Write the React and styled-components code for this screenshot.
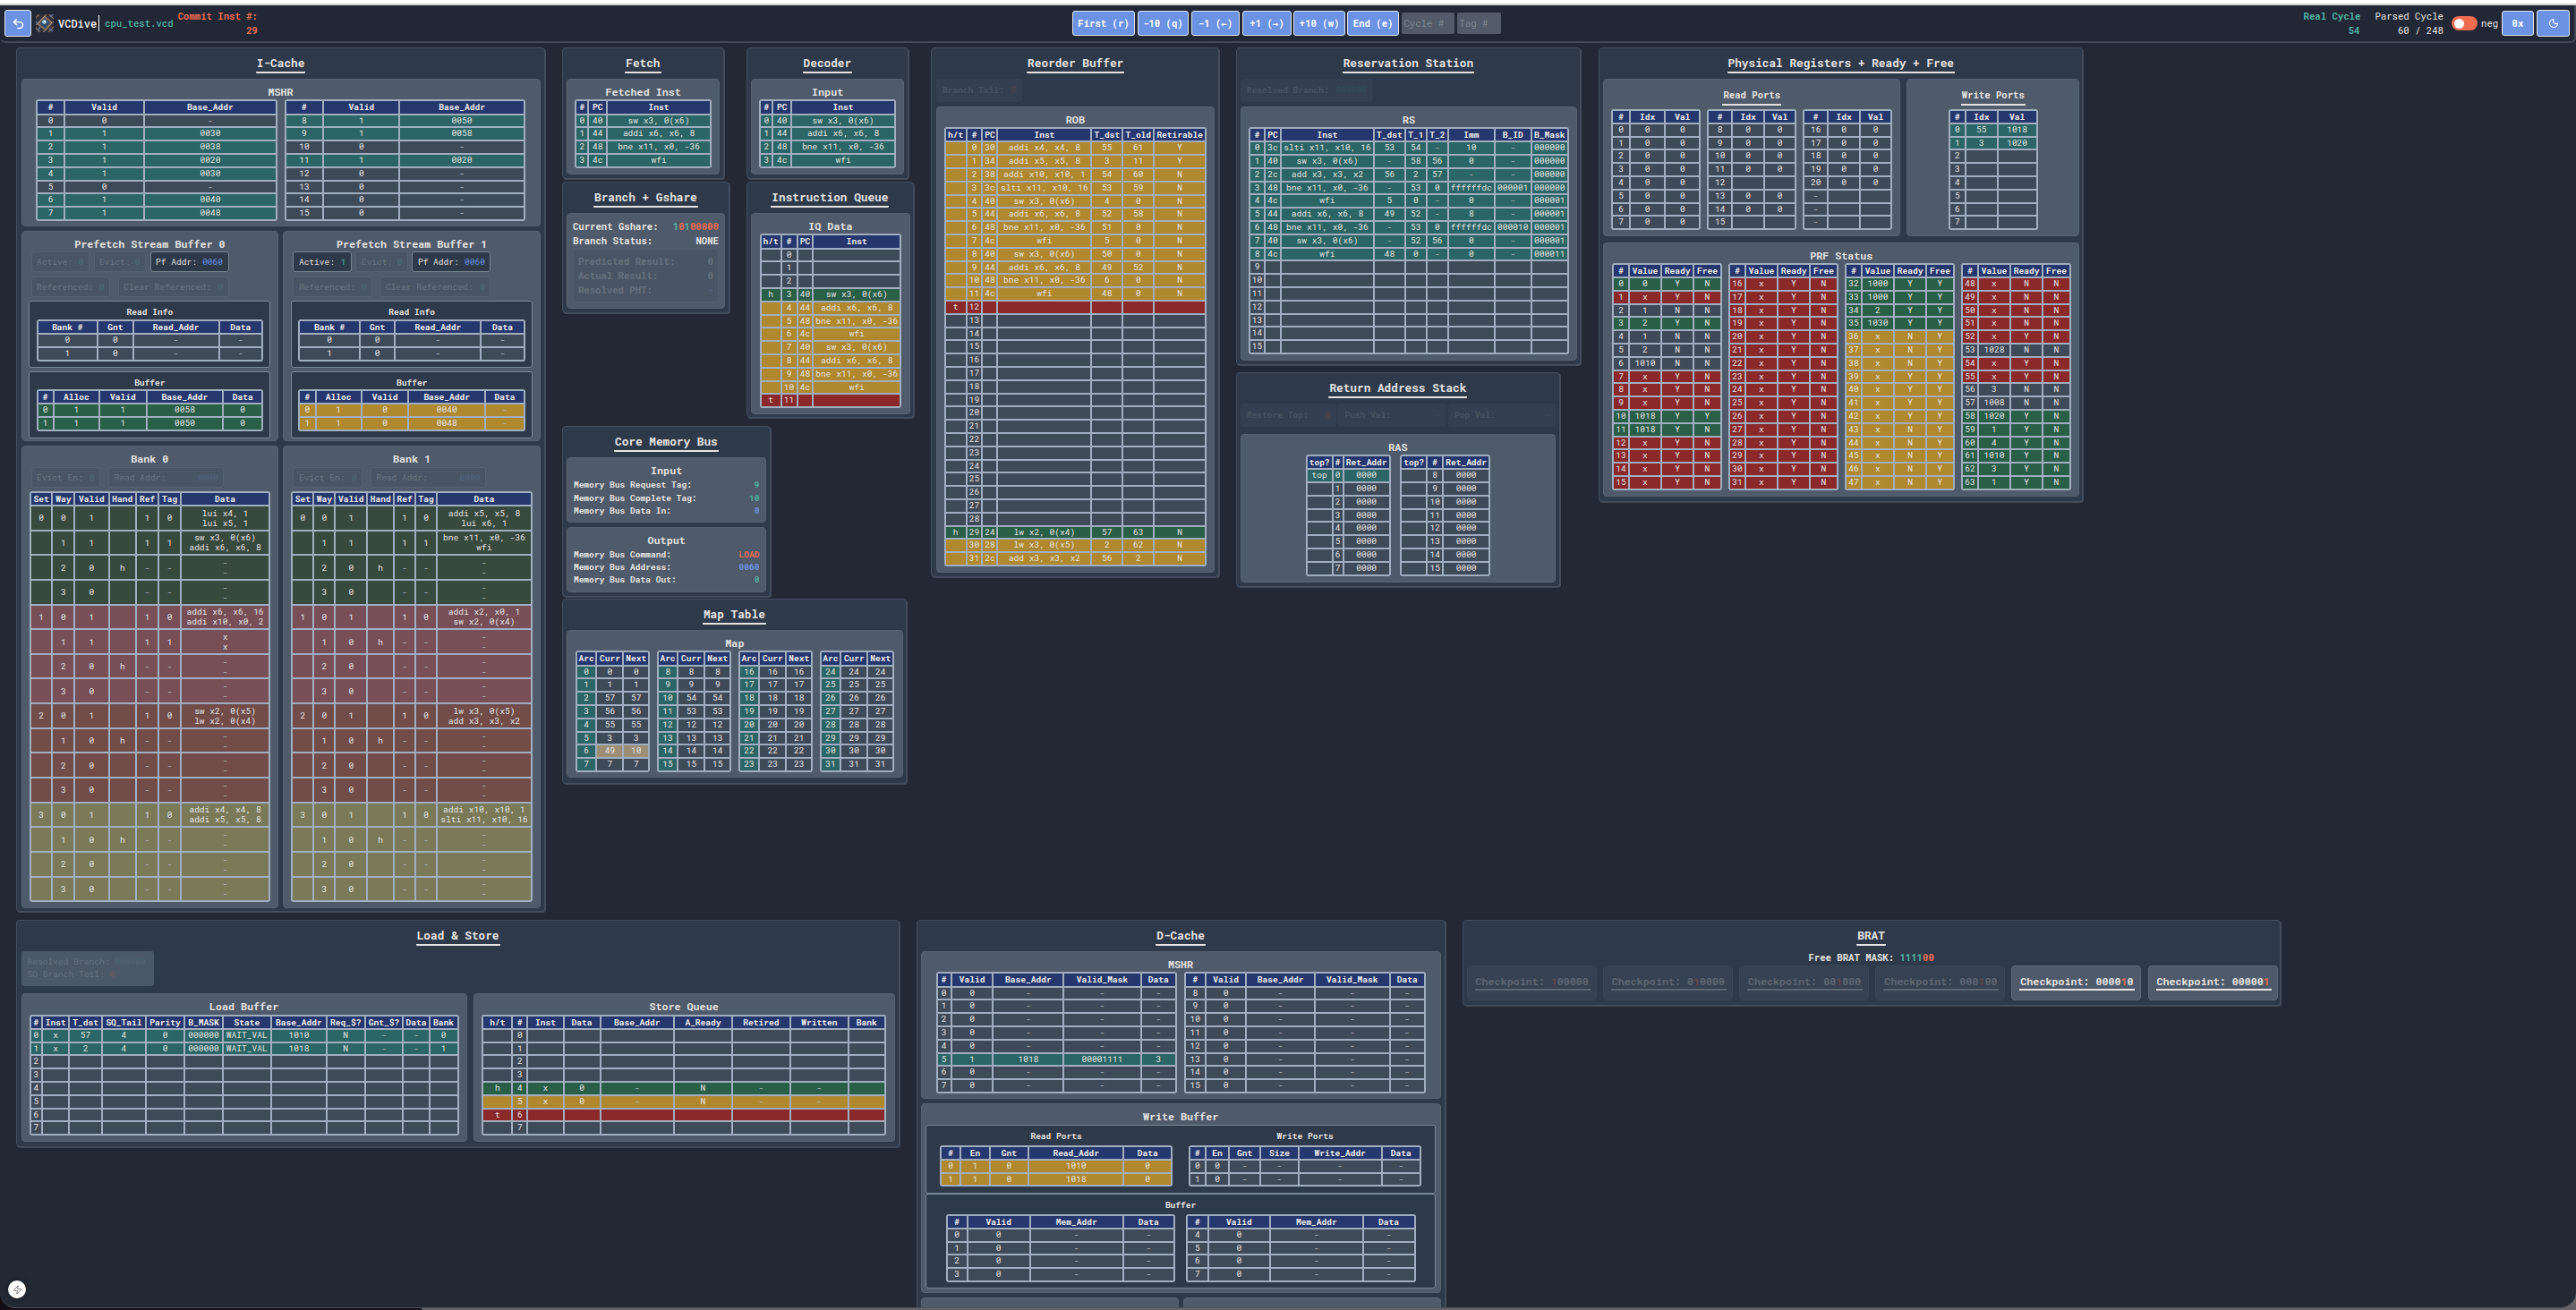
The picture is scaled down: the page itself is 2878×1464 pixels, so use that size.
import React from "react";
import styled, { createGlobalStyle, css } from "styled-components";
import { Undo2, Moon, Zap } from "lucide-react";

const c = {
  bg: "#222834",
  panel: "#2e3a4a",
  section: "#4f5b6a",
  line: "#a0aec0",
  text: "#e4e4e4",
  teal: "#4fb3a3",
  orange: "#ef6c51",
  blue: "#6c92e4",
};

const tones = {
  n: "#3f4a59",
  t: "#2b6565",
  g: "#295e47",
  y: "#b0882e",
  r: "#8b2829",
  k: "#9c8d75",
  s0: "#38493d",
  s1: "#784e57",
  s2: "#724c48",
  s3: "#7a7a58",
};

const mono = `"Roboto Mono", "DejaVu Sans Mono", "Liberation Mono", monospace`;

const Global = createGlobalStyle`
  * { box-sizing: border-box; }
  html, body { margin: 0; padding: 0; background: #fff; overflow: hidden; }
  body { font-family: ${mono}; color: ${c.text}; }
`;

/* ---------- window ---------- */
const Desktop = styled.div`
  width: 2878px;
  height: 1464px;
  overflow: hidden;
  padding-top: 4px;
  background: linear-gradient(#fff, #fff) top / 100% 40px no-repeat,
    linear-gradient(90deg, #140d14 0 471px, #676467 471px);
`;
const Window = styled.div`
  height: 1458px;
  overflow: hidden;
  border-top: 2px solid #cdd0cd;
  border-bottom: 1px solid #4c5058;
  border-radius: 0 0 18px 18px;
  background: ${c.bg};
`;
const TopBar = styled.header`
  display: flex;
  align-items: center;
  height: 42px;
  padding: 0 5px;
  border-bottom: 2px solid #414856;
  border-right: 2px solid #414856;
  border-radius: 0 0 6px 6px;
  background: #212734;
  font-size: 10.63px;
  line-height: 16px;
  white-space: nowrap;
`;
const BarGroup = styled.div`
  display: flex;
  align-items: center;
  width: ${(p) => p.$w}px;
`;
const Button = styled.button`
  display: flex;
  align-items: center;
  justify-content: center;
  flex: none;
  width: ${(p) => p.$w}px;
  height: ${(p) => p.$h || 28}px;
  margin: 0 ${(p) => p.$mr || 0}px 0 0;
  padding: 0;
  border: 1px solid #dfe3ea;
  border-radius: 3px;
  background: ${c.blue};
  color: #fff;
  font: bold 10.63px ${mono};
`;
const Brand = styled.div`
  width: 46px;
  margin-left: 5px;
  padding-right: 2px;
  font-size: 12px;
  font-weight: 500;
  line-height: 18px;
  border-right: 1px solid #fff;
  color: #f2f2f2;
`;
const FileName = styled.div`
  width: 82px;
  padding-left: 6px;
  color: ${c.teal};
  font-weight: 500;
`;
const Stat = styled.div`
  width: ${(p) => p.$w}px;
  text-align: right;
  color: ${(p) => p.$color || c.text};
  font-weight: ${(p) => (p.$bold ? 700 : 400)};
`;
const Field = styled.div`
  width: ${(p) => p.$w}px;
  height: 24px;
  margin-left: 3.3px;
  padding: 4px 2px;
  border-radius: 2px;
  background: #525b67;
  color: #7c858f;
`;
const Toggle = styled.div`
  width: 29px;
  height: 16px;
  margin: 0 4px 0 9px;
  padding: 2.5px 3px;
  border-radius: 8px;
  background: ${c.orange};
  &::before {
    content: "";
    display: block;
    width: 11px;
    height: 11px;
    border-radius: 50%;
    background: #fff;
  }
`;

/* ---------- page grid ---------- */
const Board = styled.main`
  position: relative;
  height: 1413px;
  padding: 5px 0 0 17.6px;
`;
const Row = styled.div`
  display: flex;
  align-items: flex-start;
  height: ${(p) => (p.$h ? p.$h + "px" : "auto")};
  gap: ${(p) => p.$gap || 0}px;
`;
const Column = styled.div`
  display: flex;
  flex-direction: column;
  align-items: flex-start;
  flex: none;
  width: ${(p) => p.$w}px;
  gap: ${(p) => p.$gap || 0}px;
`;
const PanelBox = styled.section`
  display: flex;
  flex-direction: column;
  flex: none;
  width: ${(p) => p.$w}px;
  height: ${(p) => p.$h}px;
  padding: 0 4px 0 ${(p) => p.$pl || 4}px;
  gap: ${(p) => p.$gap || 0}px;
  border: 1px solid #444e5d;
  border-radius: 4px;
  box-shadow: 1px 1px 0 #444b58;
  background: ${c.panel};
`;
const PanelTitle = styled.h2`
  align-self: center;
  flex: none;
  height: 28px;
  margin: 0 0 ${(p) => p.$mb}px;
  padding: 8px 1px 0;
  border-bottom: 2px solid ${c.text};
  border-radius: 1px;
  font-size: 12.75px;
  line-height: 17px;
  white-space: nowrap;
`;
const SectionBox = styled.div`
  flex: none;
  width: ${(p) => p.$w}px;
  height: ${(p) => p.$h}px;
  padding-top: 6px;
  border: 1px solid #556371;
  border-radius: 4px;
  background: ${c.section};
`;
const SectionTitle = styled.h3`
  margin: 0;
  font-size: 11.69px;
  line-height: 16.3px;
  text-align: center;
`;
const PortsTitle = styled.h4`
  width: max-content;
  height: 21.5px;
  margin: 1px auto 4px;
  padding: 1px 1px 0;
  border-bottom: 2px solid ${c.text};
  font-size: 10.63px;
  line-height: 18px;
`;
const Tables = styled.div`
  display: flex;
  justify-content: center;
  gap: ${(p) => p.$gap ?? 8}px;
`;
const Inset = styled.div`
  width: ${(p) => p.$w}px;
  height: ${(p) => p.$h}px;
  margin: ${(p) => p.$mt || 0}px auto 0;
  border: 1.5px solid #7a8896;
  border-radius: 3px;
  background: ${c.panel};
`;
const InsetTitle = styled.h4`
  margin: 0;
  padding-top: 5px;
  height: ${(p) => p.$h ?? 19.5}px;
  font-size: 9.57px;
  line-height: 13px;
  text-align: center;
`;

/* ---------- data table ---------- */
const Grid = styled.div`
  display: grid;
  flex: none;
  width: ${(p) => p.$w}px;
  padding: 2px;
  gap: 2px;
  grid-template-columns: ${(p) => p.$cols};
  grid-template-rows: 13.3px;
  grid-auto-rows: ${(p) => p.$rh}px;
  border-radius: 3px;
  background: ${c.line};
  font-size: 9.57px;
`;
const cell = css`
  display: flex;
  align-items: center;
  justify-content: center;
  overflow: visible;
  text-align: center;
  white-space: pre;
`;
const Th = styled.div`
  ${cell}
  background: #26376d;
  font-weight: 700;
  color: #eee;
`;
const Td = styled.div`
  ${cell}
  line-height: ${(p) => (p.$tall ? "11px" : "12.8px")};
  background: ${(p) => tones[p.$tone]};
  color: ${(p) => (p.$mute ? "#b4bac0" : "#e4e4e4")};
`;

function Table({ w, cols, head, rows, tall }) {
  const sum = cols.reduce((a, b) => a + b, 0);
  const tpl = cols.map((d) => ((d / sum) * (w - 2) - 2).toFixed(2) + "px").join(" ");
  return (
    <Grid $w={w} $cols={tpl} $rh={tall ? 25.65 : 12.8}>
      {head.split(" ").map((h, i) => (
        <Th key={i}>{h.replace("~", " ")}</Th>
      ))}
      {rows.map(([tone, ...cells], r) =>
        cells.map((v, i) => {
          const own = typeof v === "object" ? v : { v, tone };
          return (
            <Td key={r + "-" + i} $tone={own.tone} $tall={tall} $mute={/^[-\n]+$/.test(String(own.v))}>
              {own.v}
            </Td>
          );
        })
      )}
    </Grid>
  );
}

const Panel = ({ title, tmb, children, ...p }) => (
  <PanelBox $w={p.w} $h={p.h} $gap={p.gap} $pl={p.pl}>
    <PanelTitle $mb={(tmb ?? 6) - (p.gap || 0)}>{title}</PanelTitle>
    {children}
  </PanelBox>
);
const Section = ({ title, w, h, children }) => (
  <SectionBox $w={w} $h={h}>
    {title && <SectionTitle>{title}</SectionTitle>}
    {children}
  </SectionBox>
);

/* ---------- chips and readouts ---------- */
const ChipRow = styled.div`
  display: flex;
  gap: ${(p) => p.$gap ?? 4.5}px;
  margin: ${(p) => p.$mt || 0}px 0 0 ${(p) => p.$ml ?? 10}px;
`;
const ChipBox = styled.div`
  display: flex;
  justify-content: space-between;
  align-items: center;
  width: ${(p) => p.$w}px;
  height: ${(p) => p.$h || 23}px;
  padding: 0 5.5px;
  border: 1.5px solid #75838f;
  border-radius: 3px;
  background: ${c.panel};
  font-size: 9.57px;
  white-space: pre;
  opacity: ${(p) => (p.$off ? 0.17 : 1)};
`;
const GhostBox = styled(ChipBox)`
  padding: 0 7px;
  border: 0;
  background: #56657a;
  font-weight: 500;
  opacity: 0.15;
`;
const Hue = styled.span`
  color: ${(p) => p.$c};
`;
const Chip = ({ label, value, color = c.teal, w, h, off }) => (
  <ChipBox $w={w} $h={h} $off={off}>
    <span>{label}:</span>
    <Hue $c={color}>{value}</Hue>
  </ChipBox>
);
const Ghost = ({ label, value, color, w }) => (
  <GhostBox $w={w} $h={25.7}>
    <span>{label}:</span>
    <Hue $c={color}>{value}</Hue>
  </GhostBox>
);
const Line = styled.div`
  position: relative;
  display: flex;
  justify-content: space-between;
  padding: 0 ${(p) => p.$px}px;
  font-size: ${(p) => p.$fs}px;
  line-height: ${(p) => p.$lh}px;
  font-weight: 700;
`;
const BusLines = styled.div`
  padding-top: 1px;
`;
const Faded = styled.div`
  height: 60px;
  margin: 1px 6px 0;
  padding-top: 5px;
  border: 1px solid #67757f;
  border-radius: 3px;
  background: ${c.panel};
  opacity: 0.15;
`;
const Bits = ({ value, one = c.teal, zero = c.orange }) => (
  <span>
    {[...value].map((b, i) => (
      <Hue key={i} $c={b === "1" ? one : zero}>
        {b}
      </Hue>
    ))}
  </span>
);
const Resolved = styled.div`
  width: 148px;
  height: 39.3px;
  margin-bottom: 8px;
  padding: 5px 7px;
  border-radius: 3px;
  background: #4b5867;
  font-size: 9.57px;
  line-height: 14px;
  & > div { opacity: 0.17; }
`;
const MaskLine = styled.div`
  font-size: 10.63px;
  font-weight: 700;
  line-height: 16px;
  height: 17.3px;
  text-align: center;
`;
const Checkpoint = styled.div`
  width: 145px;
  height: 38.3px;
  padding: 8.5px 8px 0;
  border: 1px solid #5d6a78;
  border-radius: 4px;
  background: #4f5b6a;
  opacity: ${(p) => (p.$on ? 1 : 0.25)};
  font-size: 11.69px;
  font-weight: 700;
  line-height: 16px;
  white-space: nowrap;
  & > div { width: 129px; padding: 0 1px; border-bottom: 2px solid ${c.text}; }
`;
const DevBadge = styled.div`
  position: absolute;
  left: 9px;
  bottom: 10px;
  display: flex;
  align-items: center;
  justify-content: center;
  width: 20px;
  height: 20px;
  border-radius: 50%;
  background: #fff;
  color: #444;
  box-shadow: 0 0 6px rgba(0, 0, 0, 0.4);
`;

/* ---------- data ---------- */
const range = (a, b) => Array.from({ length: b - a }, (_, i) => a + i);
const parse = (s) => s.trim().split("\n").map((l) => l.trim().split("|"));
const blanks = (a, b, n, lead = false) =>
  range(a, b).map((i) => ["n", ...(lead ? [""] : []), i, ...Array(n).fill("")]);

const icMshrL = parse(`n|0|0|-
t|1|1|0030
t|2|1|0038
t|3|1|0020
t|4|1|0030
n|5|0|-
t|6|1|0040
t|7|1|0048`);
const icMshrR = parse(`t|8|1|0050
t|9|1|0058
n|10|0|-
t|11|1|0020
n|12|0|-
n|13|0|-
n|14|0|-
n|15|0|-`);
const fetched = parse(`t|0|40|sw x3, 0(x6)
t|1|44|addi x6, x6, 8
t|2|48|bne x11, x0, -36
t|3|4c|wfi`);

const bankRows = (spec) =>
  spec.flatMap(([hand, data], s) =>
    range(0, 4).map((w) => {
      const v = data[w];
      return ["s" + s, w ? "" : s, w, v ? 1 : 0, w === hand ? "h" : "", v ? 1 : "-", v ? (w ? 1 : 0) : "-", v || "-\n-"];
    })
  );
const bank0 = bankRows([
  [2, ["lui x4, 1\nlui x5, 1", "sw x3, 0(x6)\naddi x6, x6, 8"]],
  [2, ["addi x6, x6, 16\naddi x10, x0, 2", "x\nx"]],
  [1, ["sw x2, 0(x5)\nlw x2, 0(x4)"]],
  [1, ["addi x4, x4, 8\naddi x5, x5, 8"]],
]);
const bank1 = bankRows([
  [2, ["addi x5, x5, 8\nlui x6, 1", "bne x11, x0, -36\nwfi"]],
  [1, ["addi x2, x0, 1\nsw x2, 0(x4)"]],
  [1, ["lw x3, 0(x5)\nadd x3, x3, x2"]],
  [1, ["addi x10, x10, 1\nslti x11, x10, 16"]],
]);

const iq = [
  ...blanks(0, 3, 2, true),
  ...parse(`g|h|3|40|sw x3, 0(x6)
y||4|44|addi x6, x6, 8
y||5|48|bne x11, x0, -36
y||6|4c|wfi
y||7|40|sw x3, 0(x6)
y||8|44|addi x6, x6, 8
y||9|48|bne x11, x0, -36
y||10|4c|wfi
r|t|11||`),
];

const rob = [
  ...parse(`y||0|30|addi x4, x4, 8|55|61|Y
y||1|34|addi x5, x5, 8|3|11|Y
y||2|38|addi x10, x10, 1|54|60|N
y||3|3c|slti x11, x10, 16|53|59|N
y||4|40|sw x3, 0(x6)|4|0|N
y||5|44|addi x6, x6, 8|52|58|N
y||6|48|bne x11, x0, -36|51|0|N
y||7|4c|wfi|5|0|N
y||8|40|sw x3, 0(x6)|50|0|N
y||9|44|addi x6, x6, 8|49|52|N
y||10|48|bne x11, x0, -36|6|0|N
y||11|4c|wfi|48|0|N
r|t|12|||||`),
  ...blanks(13, 29, 5, true),
  ...parse(`g|h|29|24|lw x2, 0(x4)|57|63|N
y||30|28|lw x3, 0(x5)|2|62|N
y||31|2c|add x3, x3, x2|56|2|N`),
];

const rs = [
  ...parse(`t|0|3c|slti x11, x10, 16|53|54|-|10|-|000000
t|1|40|sw x3, 0(x6)|-|58|56|0|-|000000
t|2|2c|add x3, x3, x2|56|2|57|-|-|000000
t|3|48|bne x11, x0, -36|-|53|0|ffffffdc|000001|000000
t|4|4c|wfi|5|0|-|0|-|000001
t|5|44|addi x6, x6, 8|49|52|-|8|-|000001
t|6|48|bne x11, x0, -36|-|53|0|ffffffdc|000010|000001
t|7|40|sw x3, 0(x6)|-|52|56|0|-|000001
t|8|4c|wfi|48|0|-|0|-|000011`),
  ...blanks(9, 16, 8),
];

const curr = { 2: 57, 3: 56, 4: 55, 5: 3, 10: 54, 11: 53 };
const mapRows = (s) =>
  range(s, s + 8).map((i) =>
    i === 6
      ? ["k", { v: 6, tone: "t" }, 49, 10]
      : ["n", { v: i, tone: "t" }, curr[i] ?? i, curr[i] ?? i]
  );

const rasRows = (s) => range(s, s + 8).map((i) => [i ? "n" : "t", i ? "" : "top", i, "0000"]);
const portRows = (s) =>
  range(s, s + 8).map((i) =>
    i > 20 ? ["n", "-", "", ""] : i === 12 || i === 15 ? ["n", i, "", ""] : ["n", i, 0, 0]
  );

const prfText = [
  "g0YN rxYN n1NN g2YN n1NN n2NN n1010NN rxYN rxYN rxYN g1018YY g1018YN rxYN rxYN rxYN rxYN",
  Array(16).fill("rxYN").join(" "),
  "g1000YY g1000YY g2YY g1030YY yxNY yxNY yxNY yxYY yxYY yxYY yxYY yxNY yxNY yxNY yxNY yxNY",
  "rxNN rxNN rxNN rxNN rxYN n1028NN rxYN rxYN n3NN n1008NN g1020YN g1YN g4YN g1010YN g3YN g1YN",
];
const prf = prfText.map((col, k) =>
  col.split(" ").map((s, i) => [s[0], k * 16 + i, s.slice(1, -2), s.at(-2), s.at(-1)])
);

const loadRows = [
  ...parse(`t|0|x|57|4|0|000000|WAIT_VAL|1010|N|-|-|0
t|1|x|2|4|0|000000|WAIT_VAL|1018|N|-|-|1`),
  ...blanks(2, 8, 11),
];
const storeRows = [
  ...blanks(0, 4, 7, true),
  ...parse(`g|h|4|x|0|-|N|-|-|
y||5|x|0|-|N|-|-|
r|t|6|||||||`),
  ...blanks(7, 8, 7, true),
];
const dMshr = (s) =>
  range(s, s + 8).map((i) => (i === 5 ? ["t", 5, 1, "1018", "00001111", 3] : ["n", i, 0, "-", "-", "-"]));
const dBuf = (s) => range(s, s + 4).map((i) => ["n", i, 0, "-", "-"]);

/* ---------- panels ---------- */
const LogoSvg = styled.svg`
  flex: none;
  margin-left: 5px;
`;
function Logo() {
  return (
    <LogoSvg width="20" height="20" viewBox="0 0 20 20">
      <rect width="20" height="20" fill="#33303a" />
      <path d="M0 4l4-4M0 12L12 0M8 20L20 8M14 20l6-6M0 15l5 5M15 0l5 5" stroke="#8a6f5c" strokeWidth="1.2" />
      <path d="M0 8l4 4M16 3l3-3M2 18l3-4M15 16l4 3" stroke="#5b78a8" strokeWidth="1.4" />
      <path d="M10 2l8 7-7 9-9-7z" fill="#6d5b52" stroke="#b9a189" strokeWidth=".8" />
      <path d="M10 4.500l5.500 4.800-5 6.200-6-4.800z" fill="#2f4f70" />
      <circle cx="9.500" cy="8.500" r="2.300" fill="#9fd0e6" />
      <circle cx="10" cy="8" r="1" fill="#fff" />
    </LogoSvg>
  );
}

function Prefetch({ n, active, tone, rows }) {
  return (
    <Section title={`Prefetch Stream Buffer ${n}`} w={287.5} h={235.4}>
      <ChipRow>
        <Chip label="Active" value={active} w={65.5} off={!active} />
        <Chip label="Evict" value="0" w={58.5} off />
        <Chip label="Pf Addr" value="0060" color={c.blue} w={88} />
      </ChipRow>
      <ChipRow $mt={5} $gap={8.5}>
        <Chip label="Referenced" value="0" w={88.5} off />
        <Chip label="Clear Referenced" value="0" w={124} off />
      </ChipRow>
      <Inset $w={270} $h={75} $mt={4}>
        <InsetTitle>Read Info</InsetTitle>
        <Tables>
          <Table w={253.5} cols={[171, 100, 243, 123]} head="Bank~# Gnt Read_Addr Data" rows={[["n", 0, 0, "-", "-"], ["n", 1, 0, "-", "-"]]} />
        </Tables>
      </Inset>
      <Inset $w={270} $h={75} $mt={3.3}>
        <InsetTitle>Buffer</InsetTitle>
        <Tables>
          <Table w={253.5} cols={[46, 130, 133, 217, 111]} head="# Alloc Valid Base_Addr Data" rows={rows.map((r) => [tone, ...r])} />
        </Tables>
      </Inset>
    </Section>
  );
}

function Bank({ n, rows, cols }) {
  return (
    <Section title={`Bank ${n}`} w={287.5} h={516.5}>
      <ChipRow $gap={9}>
        <Chip label="Evict En" value="0" w={77.5} off />
        <Chip label="Read Addr" value="0000" color={c.blue} w={129} off />
      </ChipRow>
      <ChipRow $mt={4} $ml={0} />
      <Tables>
        <Table w={269.5} tall cols={cols} head="Set Way Valid Hand Ref Tag Data" rows={rows} />
      </Tables>
    </Section>
  );
}

function ICache() {
  return (
    <Panel title="I-Cache" w={591} h={965.5} gap={5} pl={5}>
      <Section title="MSHR" w={580} h={165}>
        <Tables>
          <Table w={269.3} cols={[78, 226, 373]} head="# Valid Base_Addr" rows={icMshrL} />
          <Table w={269.3} cols={[108, 215, 353]} head="# Valid Base_Addr" rows={icMshrR} />
        </Tables>
      </Section>
      <Row $gap={5.3}>
        <Prefetch n={0} active={0} tone="g" rows={[[0, 1, 1, "0058", 0], [1, 1, 1, "0050", 0]]} />
        <Prefetch n={1} active={1} tone="y" rows={[[0, 1, 0, "0040", "-"], [1, 1, 0, "0048", "-"]]} />
      </Row>
      <Row $gap={5.3}>
        <Bank n={0} rows={bank0} cols={[63, 63, 97, 77, 64, 63, 251]} />
        <Bank n={1} rows={bank1} cols={[61, 60, 92, 75, 61, 61, 268]} />
      </Row>
    </Panel>
  );
}

function FrontEnd() {
  const bus = { $px: 7, $fs: 9.57, $lh: 14.2 };
  const br = { $px: 6, $fs: 10.63, $lh: 16 };
  return (
    <Column $w={412}>
      <Row $h={423}>
        <Column $w={206} $gap={3.5}>
          <Panel title="Fetch" w={181} h={146.5}>
            <Section title="Fetched Inst" w={171.5} h={107}>
              <Tables>
                <Table w={152.4} cols={[42, 63, 348]} head="# PC Inst" rows={fetched} />
              </Tables>
            </Section>
          </Panel>
          <Panel title="Branch + Gshare" w={187} h={146.5}>
            <Section w={177} h={107}>
              <Line {...br}>
                <span>Current Gshare:</span>
                <Bits value="10100000" />
              </Line>
              <Line {...br}>
                <span>Branch Status:</span>
                <span>NONE</span>
              </Line>
              <Faded>
                <Line {...br} $px={5}>
                  <span>Predicted Result:</span>
                  <span>0</span>
                </Line>
                <Line {...br} $px={5}>
                  <span>Actual Result:</span>
                  <span>0</span>
                </Line>
                <Line {...br} $px={5}>
                  <span>Resolved PHT:</span>
                  <Hue $c={c.blue}>-</Hue>
                </Line>
              </Faded>
            </Section>
          </Panel>
        </Column>
        <Column $w={206} $gap={3.5}>
          <Panel title="Decoder" w={181} h={146.5}>
            <Section title="Input" w={171.5} h={107}>
              <Tables>
                <Table w={152.4} cols={[42, 63, 348]} head="# PC Inst" rows={fetched} />
              </Tables>
            </Section>
          </Panel>
          <Panel title="Instruction Queue" w={187} h={264}>
            <Section title="IQ Data" w={178} h={225.3}>
              <Tables>
                <Table w={158.4} cols={[69, 54, 54, 294]} head="h/t # PC Inst" rows={iq} />
              </Tables>
            </Section>
          </Panel>
        </Column>
      </Row>
      <Column $gap={2.5} $w={412}>
        <Panel title="Core Memory Bus" w={233} h={190.5} gap={4.5}>
          <Section title="Input" w={223.5} h={73}>
            <BusLines>
              <Line {...bus}>
                <span>Memory Bus Request Tag:</span>
                <Hue $c={c.teal}>9</Hue>
              </Line>
              <Line {...bus}>
                <span>Memory Bus Complete Tag:</span>
                <Hue $c={c.teal}>10</Hue>
              </Line>
              <Line {...bus}>
                <span>Memory Bus Data In:</span>
                <Hue $c={c.blue}>0</Hue>
              </Line>
            </BusLines>
          </Section>
          <Section title="Output" w={223.5} h={73}>
            <BusLines>
              <Line {...bus}>
                <span>Memory Bus Command:</span>
                <Hue $c={c.orange}>LOAD</Hue>
              </Line>
              <Line {...bus}>
                <span>Memory Bus Address:</span>
                <Hue $c={c.blue}>0060</Hue>
              </Line>
              <Line {...bus}>
                <span>Memory Bus Data Out:</span>
                <Hue $c={c.teal}>0</Hue>
              </Line>
            </BusLines>
          </Section>
        </Panel>
        <Panel title="Map Table" w={385} h={206.5}>
          <Section title="Map" w={376} h={165}>
            <Tables $gap={7.3}>
              {[0, 8, 16, 24].map((s) => (
                <Table key={s} w={83.7} cols={[69, 90, 87]} head="Arc Curr Next" rows={mapRows(s)} />
              ))}
            </Tables>
          </Section>
        </Panel>
      </Column>
    </Column>
  );
}

function Rob() {
  return (
    <Column $w={341}>
      <Panel title="Reorder Buffer" w={322.5} h={591.5} pl={5} gap={5.2}>
        <Ghost label="Branch Tail" value="0" color={c.orange} w={96} />
        <Section title="ROB" w={311} h={521}>
          <Tables>
            <Table w={293.7} cols={[72, 54, 51, 315, 105, 105, 174]} head="h/t # PC Inst T_dst T_old Retirable" rows={rob} />
          </Tables>
        </Section>
      </Panel>
    </Column>
  );
}

function Stations() {
  return (
    <Column $w={405.4} $gap={8}>
      <Panel title="Reservation Station" w={385} h={355} gap={5}>
        <Ghost label="Resolved Branch" value="000000" color={c.teal} w={148} />
        <Section title="RS" w={376} h={284.5}>
          <Tables>
            <Table w={357.7} cols={[51, 54, 312, 105, 72, 72, 156, 123, 123]} head="# PC Inst T_dst T_1 T_2 Imm B_ID B_Mask" rows={rs} />
          </Tables>
        </Section>
      </Panel>
      <Panel title="Return Address Stack" w={362} h={239.5} gap={8}>
        <ChipRow $ml={0} $gap={2.5}>
          <Ghost label="Restore Top" value="0" color={c.orange} w={107} />
          <Ghost label="Push Val" value="-" color={c.blue} w={120} />
          <Ghost label="Pop Val" value="-" color={c.blue} w={120} />
        </ChipRow>
        <Section title="RAS" w={352} h={166.5}>
          <Tables $gap={10.5}>
            <Table w={95} cols={[87, 36, 156]} head="top? # Ret_Addr" rows={rasRows(0)} />
            <Table w={101} cols={[87, 54, 156]} head="top? # Ret_Addr" rows={rasRows(8)} />
          </Tables>
        </Section>
      </Panel>
    </Column>
  );
}

function Registers() {
  return (
    <Panel title="Physical Registers + Ready + Free" w={541} h={507.5} gap={6.5}>
      <Row $gap={7}>
        <Section w={332} h={176}>
          <PortsTitle>Read Ports</PortsTitle>
          <Tables $gap={7}>
            <Table w={100} cols={[55, 110, 109]} head="# Idx Val" rows={portRows(0)} />
            <Table w={100} cols={[75, 101, 98]} head="# Idx Val" rows={portRows(8)} />
            <Table w={100} cols={[75, 101, 98]} head="# Idx Val" rows={portRows(16)} />
          </Tables>
        </Section>
        <Section w={193} h={176}>
          <PortsTitle>Write Ports</PortsTitle>
          <Tables>
            <Table w={99.5} cols={[50, 101, 123]} head="# Idx Val" rows={[["t", 0, 55, 1018], ["t", 1, 3, 1020], ...blanks(2, 8, 2)]} />
          </Tables>
        </Section>
      </Row>
      <Section title="PRF Status" w={532} h={284.5}>
        <Tables $gap={7.5}>
          {prf.map((rows, i) => (
            <Table key={i} w={122.5} cols={[51, 101, 103, 85]} head="# Value Ready Free" rows={rows} />
          ))}
        </Tables>
      </Section>
    </Panel>
  );
}

function LoadStore() {
  return (
    <Column $w={1006}>
      <Panel title="Load & Store" w={987} h={253.5} pl={5}>
        <Resolved>
          <div>
            Resolved Branch: <Hue $c={c.teal}>000000</Hue>
          </div>
          <div>
            SQ Branch Tail: <Hue $c={c.orange}>0</Hue>
          </div>
        </Resolved>
        <Row $gap={7}>
          <Section title="Load Buffer" w={498} h={165.7}>
            <Tables>
              <Table
                w={480}
                cols={[21, 46, 57, 75, 67, 65, 84, 95, 66, 66, 45, 49]}
                head="# Inst T_dst SQ_Tail Parity B_MASK State Base_Addr Req_$? Gnt_$? Data Bank"
                rows={loadRows}
              />
            </Tables>
          </Section>
          <Section title="Store Queue" w={471} h={165.7}>
            <Tables>
              <Table
                w={451.5}
                cols={[51, 26, 62, 63, 127, 100, 100, 100, 63]}
                head="h/t # Inst Data Base_Addr A_Ready Retired Written Bank"
                rows={storeRows}
              />
            </Tables>
          </Section>
        </Row>
      </Panel>
    </Column>
  );
}

function DCache() {
  return (
    <Column $w={610}>
      <Panel title="D-Cache" w={591} h={600} gap={4.8}>
        <Section title="MSHR" w={581} h={165.5}>
          <Tables>
            <Table w={269.5} cols={[41, 118, 200, 218, 100]} head="# Valid Base_Addr Valid_Mask Data" rows={dMshr(0)} />
            <Table w={269.5} cols={[57, 116, 193, 213, 98]} head="# Valid Base_Addr Valid_Mask Data" rows={dMshr(8)} />
          </Tables>
        </Section>
        <Section title="Write Buffer" w={581} h={212}>
          <Inset $w={569.5} $h={77}>
            <Tables $gap={18}>
              <div>
                <InsetTitle $h={22}>Read Ports</InsetTitle>
                <Table
                  w={260}
                  cols={[56, 82, 110, 268, 136]}
                  head="# En Gnt Read_Addr Data"
                  rows={[["y", 0, 1, 0, "1010", 0], ["y", 1, 1, 0, "1018", 0]]}
                />
              </div>
              <div>
                <InsetTitle $h={22}>Write Ports</InsetTitle>
                <Table
                  w={260}
                  cols={[45, 67, 88, 108, 235, 110]}
                  head="# En Gnt Size Write_Addr Data"
                  rows={[["n", 0, 0, "-", "-", "-", "-"], ["n", 1, 0, "-", "-", "-", "-"]]}
                />
              </div>
            </Tables>
          </Inset>
          <Inset $w={569.5} $h={106} $mt={0.5}>
            <InsetTitle $h={21.5}>Buffer</InsetTitle>
            <Tables $gap={12}>
              <Table w={256.5} cols={[58, 177, 261, 145]} head="# Valid Mem_Addr Data" rows={dBuf(0)} />
              <Table w={256.5} cols={[60, 176, 262, 147]} head="# Valid Mem_Addr Data" rows={dBuf(4)} />
            </Tables>
          </Inset>
        </Section>
        <Row $gap={5.3}>
          <Section title="Bank 0" w={288} h={150} />
          <Section title="Bank 1" w={288} h={150} />
        </Row>
      </Panel>
    </Column>
  );
}

function Brat() {
  return (
    <Panel title="BRAT" w={914} h={95.5} tmb={5}>
      <MaskLine>
        Free BRAT MASK: <Bits value="111100" />
      </MaskLine>
      <Row $gap={7.2}>
        {["100000", "010000", "001000", "000100", "000010", "000001"].map((m, i) => (
          <Checkpoint key={m} $on={i > 3}>
            <div>
              Checkpoint: <Bits value={m} one={c.orange} zero={c.text} />
            </div>
          </Checkpoint>
        ))}
      </Row>
    </Panel>
  );
}

function Header() {
  return (
    <TopBar>
      <BarGroup $w={1193.5}>
        <Button $w={30} $h={30}>
          <Undo2 size={15} strokeWidth={2.3} />
        </Button>
        <Logo />
        <Brand>VCDive</Brand>
        <FileName>cpu_test.vcd</FileName>
        <Stat $w={95} $color={c.orange} $bold>
          Commit Inst #:
          <br />
          29
        </Stat>
      </BarGroup>
      <BarGroup $w={1376.5}>
        <Button $w={70.3} $mr={2.7}>First (r)</Button>
        <Button $w={57.3} $mr={2.7}>-10 (q)</Button>
        <Button $w={54.3} $mr={2.7}>-1 (←)</Button>
        <Button $w={55.5} $mr={1.7}>+1 (→)</Button>
        <Button $w={58.5} $mr={1.7}>+10 (w)</Button>
        <Button $w={58}>End (e)</Button>
        <Field $w={58.7}>Cycle #</Field>
        <Field $w={49}>Tag #</Field>
      </BarGroup>
      <BarGroup>
        <Stat $w={63} $color={c.teal} $bold>
          Real Cycle
          <br />
          54
        </Stat>
        <Stat $w={93.5}>
          Parsed Cycle
          <br />
          60 / 248
        </Stat>
        <Toggle />
        <Stat $w={19}>neg</Stat>
        <BarGroup $w={4} />
        <Button $w={36} $mr={3}>0x</Button>
        <Button $w={37} $h={30}>
          <Moon size={12} strokeWidth={2.3} />
        </Button>
      </BarGroup>
    </TopBar>
  );
}

export default function App() {
  return (
    <>
      <Global />
      <Desktop>
        <Window>
          <Header />
          <Board>
            <Row $h={975}>
              <Column $w={610.3}>
                <ICache />
              </Column>
              <FrontEnd />
              <Rob />
              <Stations />
              <Registers />
            </Row>
            <Row>
              <LoadStore />
              <DCache />
              <Brat />
            </Row>
            <DevBadge>
              <Zap size={11} strokeWidth={1.5} />
            </DevBadge>
          </Board>
        </Window>
      </Desktop>
    </>
  );
}
